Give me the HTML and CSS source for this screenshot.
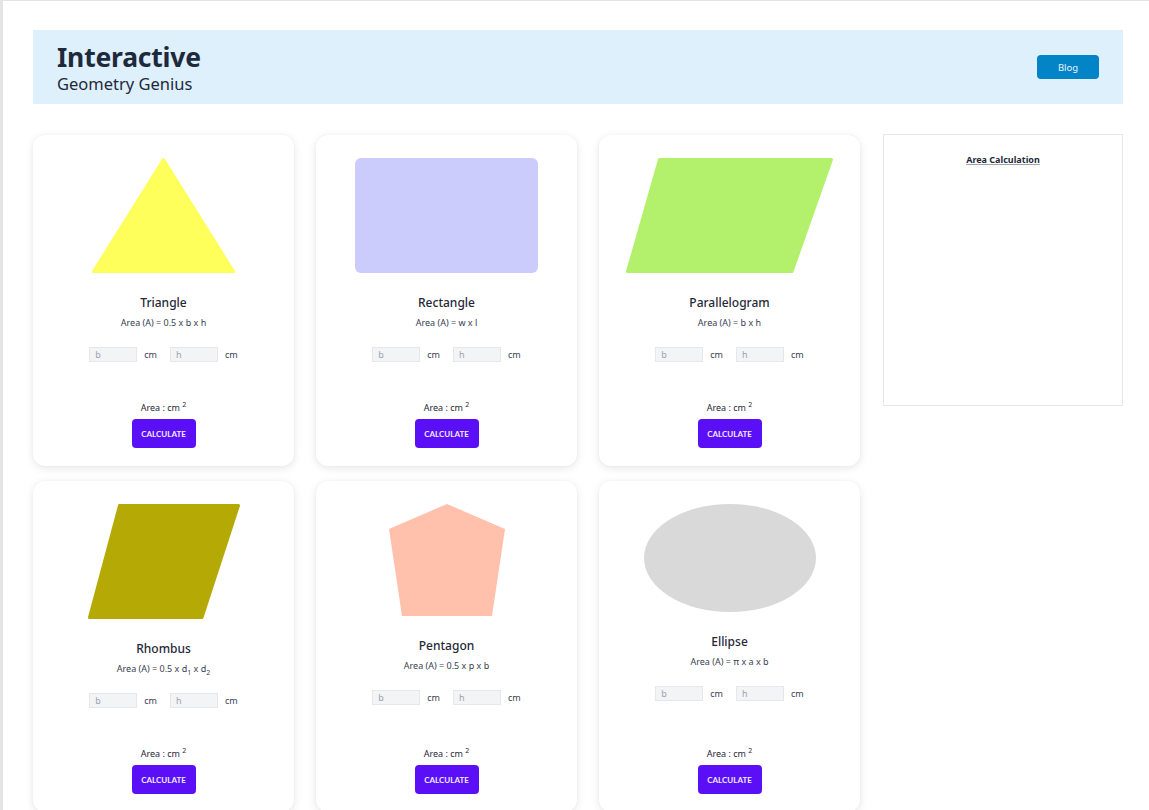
FILE: index.html
```html
<!DOCTYPE html>
<html lang="en">
<head>
<meta charset="utf-8">
<title>Interactive Geometry Genius</title>
<link rel="stylesheet" href="styles.css">
</head>
<body>
<div class="page">
  <header class="hero">
    <div class="brand">
      <h1 class="brand-title">Interactive</h1>
      <p class="brand-sub">Geometry Genius</p>
    </div>
    <button class="blog-btn">Blog</button>
  </header>

  <main class="main">
    <section class="cards">
      <article class="card">
        <div class="shape">
          <svg width="143" height="115" viewBox="0 0 143 115"><polygon points="71.5,1.5 1.5,113.5 141.5,113.5" fill="#ffff5c" stroke="#ffff5c" stroke-width="3" stroke-linejoin="round"/></svg>
        </div>
        <h2 class="card-title">Triangle</h2>
        <p class="formula">Area (A) = 0.5 x b x h</p>
        <div class="inputs">
          <span class="pair"><input class="field" placeholder="b"><span class="unit">cm</span></span>
          <span class="pair"><input class="field" placeholder="h"><span class="unit">cm</span></span>
        </div>
        <div class="footer">
          <p class="result">Area :  cm <sup>2</sup></p>
          <button class="calc-btn">CALCULATE</button>
        </div>
      </article>

      <article class="card">
        <div class="shape">
          <svg width="183" height="115" viewBox="0 0 183 115"><rect x="0" y="0" width="183" height="115" rx="6" fill="#ccccfc"/></svg>
        </div>
        <h2 class="card-title">Rectangle</h2>
        <p class="formula">Area (A) = w x l</p>
        <div class="inputs">
          <span class="pair"><input class="field" placeholder="b"><span class="unit">cm</span></span>
          <span class="pair"><input class="field" placeholder="h"><span class="unit">cm</span></span>
        </div>
        <div class="footer">
          <p class="result">Area :  cm <sup>2</sup></p>
          <button class="calc-btn">CALCULATE</button>
        </div>
      </article>

      <article class="card">
        <div class="shape">
          <svg width="207" height="115" viewBox="0 0 207 115"><polygon points="33.5,1.5 205.5,1.5 166,113.5 1.5,113.5" fill="#b3f06b" stroke="#b3f06b" stroke-width="3" stroke-linejoin="round"/></svg>
        </div>
        <h2 class="card-title">Parallelogram</h2>
        <p class="formula">Area (A) = b x h</p>
        <div class="inputs">
          <span class="pair"><input class="field" placeholder="b"><span class="unit">cm</span></span>
          <span class="pair"><input class="field" placeholder="h"><span class="unit">cm</span></span>
        </div>
        <div class="footer">
          <p class="result">Area :  cm <sup>2</sup></p>
          <button class="calc-btn">CALCULATE</button>
        </div>
      </article>

      <article class="card">
        <div class="shape">
          <svg width="152" height="115" viewBox="0 0 152 115"><polygon points="31.5,1.5 150.5,1.5 114,113.5 1.5,113.5" fill="#b5aa05" stroke="#b5aa05" stroke-width="3" stroke-linejoin="round"/></svg>
        </div>
        <h2 class="card-title">Rhombus</h2>
        <p class="formula">Area (A) = 0.5 x d<sub>1</sub> x d<sub>2</sub></p>
        <div class="inputs">
          <span class="pair"><input class="field" placeholder="b"><span class="unit">cm</span></span>
          <span class="pair"><input class="field" placeholder="h"><span class="unit">cm</span></span>
        </div>
        <div class="footer">
          <p class="result">Area :  cm <sup>2</sup></p>
          <button class="calc-btn">CALCULATE</button>
        </div>
      </article>

      <article class="card">
        <div class="shape">
          <svg width="116" height="112" viewBox="0 0 116 112"><polygon points="58,0 116,25 103,112 13,112 0,25" fill="#ffc1ab"/></svg>
        </div>
        <h2 class="card-title">Pentagon</h2>
        <p class="formula">Area (A) = 0.5 x p x b</p>
        <div class="inputs">
          <span class="pair"><input class="field" placeholder="b"><span class="unit">cm</span></span>
          <span class="pair"><input class="field" placeholder="h"><span class="unit">cm</span></span>
        </div>
        <div class="footer">
          <p class="result">Area :  cm <sup>2</sup></p>
          <button class="calc-btn">CALCULATE</button>
        </div>
      </article>

      <article class="card">
        <div class="shape">
          <svg width="172" height="108" viewBox="0 0 172 108"><ellipse cx="86" cy="54" rx="86" ry="54" fill="#d9d9d9"/></svg>
        </div>
        <h2 class="card-title">Ellipse</h2>
        <p class="formula">Area (A) = π x a x b</p>
        <div class="inputs">
          <span class="pair"><input class="field" placeholder="b"><span class="unit">cm</span></span>
          <span class="pair"><input class="field" placeholder="h"><span class="unit">cm</span></span>
        </div>
        <div class="footer">
          <p class="result">Area :  cm <sup>2</sup></p>
          <button class="calc-btn">CALCULATE</button>
        </div>
      </article>
    </section>

    <aside class="panel">
      <h3 class="panel-title">Area Calculation</h3>
    </aside>
  </main>
</div>
</body>
</html>
```

FILE: styles.css
```css
* { box-sizing: border-box; }

html, body {
  margin: 0;
  padding: 0;
  background: #ffffff;
}

body {
  font-family: "Noto Sans", "Open Sans", Arial, sans-serif;
  color: #1f2937;
  border-top: 1px solid #e4e4e4;
  border-left: 3px solid #e4e4e4;
  min-height: 810px;
}

.page {
  padding: 29px 26px 0 30px;
}

.hero {
  display: flex;
  align-items: center;
  justify-content: space-between;
  background: #dff0fd;
  height: 74px;
  padding: 0 24px;
}

.brand {
  padding-top: 1px;
}

.brand-title {
  margin: 0;
  font-size: 26.5px;
  line-height: 32px;
  font-weight: 700;
  color: #1e293b;
  letter-spacing: -0.2px;
}

.brand-sub {
  margin: 0;
  font-size: 16.5px;
  line-height: 21px;
  color: #1e293b;
}

.blog-btn {
  width: 62px;
  height: 24px;
  border: none;
  border-radius: 4px;
  background: #0284c7;
  color: #e6f4ff;
  font-family: inherit;
  font-size: 9.5px;
}

.main {
  display: flex;
  align-items: flex-start;
  gap: 23px;
  margin-top: 30px;
}

.cards {
  flex: 0 0 827px;
  display: grid;
  grid-template-columns: repeat(3, 261px);
  column-gap: 22px;
  row-gap: 15px;
  margin-top: 1px;
}

.card {
  display: flex;
  flex-direction: column;
  align-items: center;
  background: #ffffff;
  border-radius: 12px;
  box-shadow: 0 2px 8px rgba(0, 0, 0, 0.10), 0 0 2px rgba(0, 0, 0, 0.04);
  padding: 23px 16px 18px;
  height: 331px;
}

.shape {
  display: flex;
  justify-content: center;
  align-items: flex-start;
}

.shape svg { display: block; }

.card-title {
  margin: 22px 0 0;
  font-size: 12px;
  line-height: 16px;
  font-weight: 500;
  color: #1f2937;
}

.formula {
  margin: 5px 0 0;
  font-size: 9px;
  line-height: 13px;
  color: #374151;
}

.formula sub {
  font-size: 7px;
  line-height: 0;
}

.inputs {
  display: flex;
  gap: 13px;
  margin-top: 18px;
}

.pair {
  display: flex;
  align-items: center;
  gap: 7px;
}

.field {
  width: 48px;
  height: 15px;
  padding: 0 5px;
  border: 1px solid #e5e7eb;
  background: #f3f4f6;
  font-family: inherit;
  font-size: 9px;
  color: #374151;
  outline: none;
}

.field::placeholder { color: #9ca3af; }

.unit {
  font-size: 9px;
  color: #374151;
}

.footer {
  margin-top: auto;
  display: flex;
  flex-direction: column;
  align-items: center;
}

.result {
  margin: 0;
  font-size: 9px;
  line-height: 14px;
  color: #1f2937;
}

.result sup {
  font-size: 7px;
  line-height: 0;
}

.calc-btn {
  margin-top: 4px;
  width: 64px;
  height: 29px;
  border: none;
  border-radius: 4px;
  background: #5b0ff6;
  color: #f1eaff;
  font-family: "Lato", "Noto Sans", sans-serif;
  font-size: 8px;
  font-weight: 700;
}

.panel {
  flex: 0 0 240px;
  height: 272px;
  border: 1px solid #e5e7eb;
  padding-top: 18px;
  text-align: center;
}

.panel-title {
  margin: 0;
  font-size: 9px;
  line-height: 13px;
  font-weight: 700;
  color: #1f2937;
  text-decoration: underline;
  text-decoration-color: #9ca3af;
}
```
